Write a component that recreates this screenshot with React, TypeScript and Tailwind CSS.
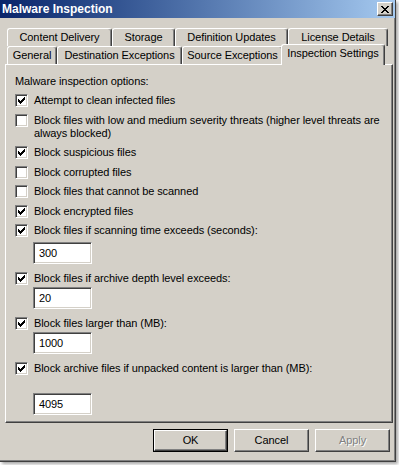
import type { ReactNode } from 'react'

const sunken =
  'border border-t-[#808080] border-l-[#808080] border-b-white border-r-white shadow-[inset_1px_1px_0_#404040,inset_-1px_-1px_0_#d4d0c8]'
const raised =
  'border border-t-white border-l-white border-b-[#404040] border-r-[#404040] shadow-[inset_-1px_-1px_0_#808080]'

function Check() {
  // classic 7x7 pixel check mark, drawn column by column
  const cols = [2, 3, 4, 3, 2, 1, 0]
  return (
    <svg width="7" height="7" viewBox="0 0 7 7" shapeRendering="crispEdges">
      {cols.map((y, x) => (
        <rect key={x} x={x} y={y} width="1" height="3" fill="#000" />
      ))}
    </svg>
  )
}

function Box({ checked }: { checked: boolean }) {
  return (
    <span className={`w-[13px] h-[13px] shrink-0 bg-white flex items-center justify-center ${sunken}`}>
      {checked && <Check />}
    </span>
  )
}

function Option({ checked, children, className = '' }: { checked: boolean; children: ReactNode; className?: string }) {
  return (
    <div className={`flex items-start gap-[6px] ${className}`}>
      <Box checked={checked} />
      <span className="leading-[13px]">{children}</span>
    </div>
  )
}

function Field({ value, className = '' }: { value: string; className?: string }) {
  return (
    <div className={`ml-[18px] w-[59px] h-[22px] bg-white flex items-center px-[5px] ${sunken} ${className}`}>
      {value}
    </div>
  )
}

function Tab({ label, w, selected = false }: { label: string; w: string; selected?: boolean }) {
  const base = 'border-t border-l border-t-white border-l-white border-r border-r-[#404040] shadow-[inset_-1px_0_0_#808080] rounded-t-[3px] flex items-center justify-center whitespace-nowrap'
  if (selected) {
    return (
      <div className={`${w} ${base} relative z-10 -mx-[2px] -mt-[2px] h-[21px] -mb-[1px] bg-[#d4d0c8] pb-[3px]`}>
        {label}
      </div>
    )
  }
  return <div className={`${w} ${base} h-[18px]`}>{label}</div>
}

function Btn({ label, def = false, disabled = false }: { label: string; def?: boolean; disabled?: boolean }) {
  return (
    <div className={`w-[75px] h-[23px] ${def ? 'border border-black' : ''}`}>
      <div className={`w-full h-full flex items-center justify-center ${raised} ${disabled ? 'text-[#808080] [text-shadow:1px_1px_0_#fff]' : ''}`}>
        {label}
      </div>
    </div>
  )
}

export default function App() {
  return (
    <div className="w-[399px] h-[465px] bg-white font-['Liberation_Sans',Arial,sans-serif] text-[11px] tracking-[-0.08px] text-black">
      <div className="w-[396px] h-[462px] bg-[#d4d0c8] border-r border-b border-r-[#404040] border-b-[#404040] shadow-[inset_-1px_-1px_0_#808080,2px_2px_3px_rgba(0,0,0,0.35)] flex flex-col">
        {/* title bar */}
        <div className="h-[18px] bg-gradient-to-r from-[#0a246a] to-[#a6caf0] flex items-center justify-between pl-[2px] pr-[2px]">
          <span className="text-white font-bold text-[12px] tracking-normal">Malware Inspection</span>
          <div className={`w-[16px] h-[14px] bg-[#d4d0c8] flex items-center justify-center ${raised}`}>
            <svg width="8" height="7" viewBox="0 0 8 7" shapeRendering="crispEdges">
              <path d="M0 0h2v1H0zM6 0h2v1H6zM1 1h2v1H1zM5 1h2v1H5zM2 2h4v1H2zM3 3h2v1H3zM2 4h4v1H2zM1 5h2v1H1zM5 5h2v1H5zM0 6h2v1H0zM6 6h2v1H6z" fill="#000" />
            </svg>
          </div>
        </div>

        {/* tabs */}
        <div className="mt-[10px] pl-[7px] flex">
          <Tab label="Content Delivery" w="w-[105px]" />
          <Tab label="Storage" w="w-[63px]" />
          <Tab label="Definition Updates" w="w-[113px]" />
          <Tab label="License Details" w="w-[100px]" />
        </div>
        <div className="pl-[7px] flex items-end h-[18px]">
          <Tab label="General" w="w-[50px]" />
          <Tab label="Destination Exceptions" w="w-[125px]" />
          <Tab label="Source Exceptions" w="w-[101px]" />
          <Tab label="Inspection Settings" w="w-[104px]" selected />
        </div>

        {/* panel */}
        <div className="ml-[5px] w-[388px] h-[359px] border-t border-l border-t-white border-l-white border-r border-b border-r-[#404040] border-b-[#404040] shadow-[inset_-1px_-1px_0_#808080] pt-[10px] pl-[9px] flex flex-col">
          <div className="leading-[13px]">Malware inspection options:</div>
          <Option checked className="mt-[6px]">Attempt to clean infected files</Option>
          <Option checked={false} className="mt-[7px]">
            Block files with low and medium severity threats (higher level threats are
            <br />
            always blocked)
          </Option>
          <Option checked className="mt-[6px]">Block suspicious files</Option>
          <Option checked={false} className="mt-[7px]">Block corrupted files</Option>
          <Option checked={false} className="mt-[6px]">Block files that cannot be scanned</Option>
          <Option checked className="mt-[7px]">Block encrypted files</Option>
          <Option checked className="mt-[6px]">Block files if scanning time exceeds (seconds):</Option>
          <Field value="300" className="mt-[5px]" />
          <Option checked className="mt-[8px]">Block files if archive depth level exceeds:</Option>
          <Field value="20" className="mt-[2px]" />
          <Option checked className="mt-[8px]">Block files larger than (MB):</Option>
          <Field value="1000" className="mt-[2px]" />
          <Option checked className="mt-[8px]">Block archive files if unpacked content is larger than (MB):</Option>
          <Field value="4095" className="mt-[18px]" />
        </div>

        {/* buttons */}
        <div className="mt-[6px] pr-[5px] flex justify-end gap-[6px]">
          <Btn label="OK" def />
          <Btn label="Cancel" />
          <Btn label="Apply" disabled />
        </div>
      </div>
    </div>
  )
}
